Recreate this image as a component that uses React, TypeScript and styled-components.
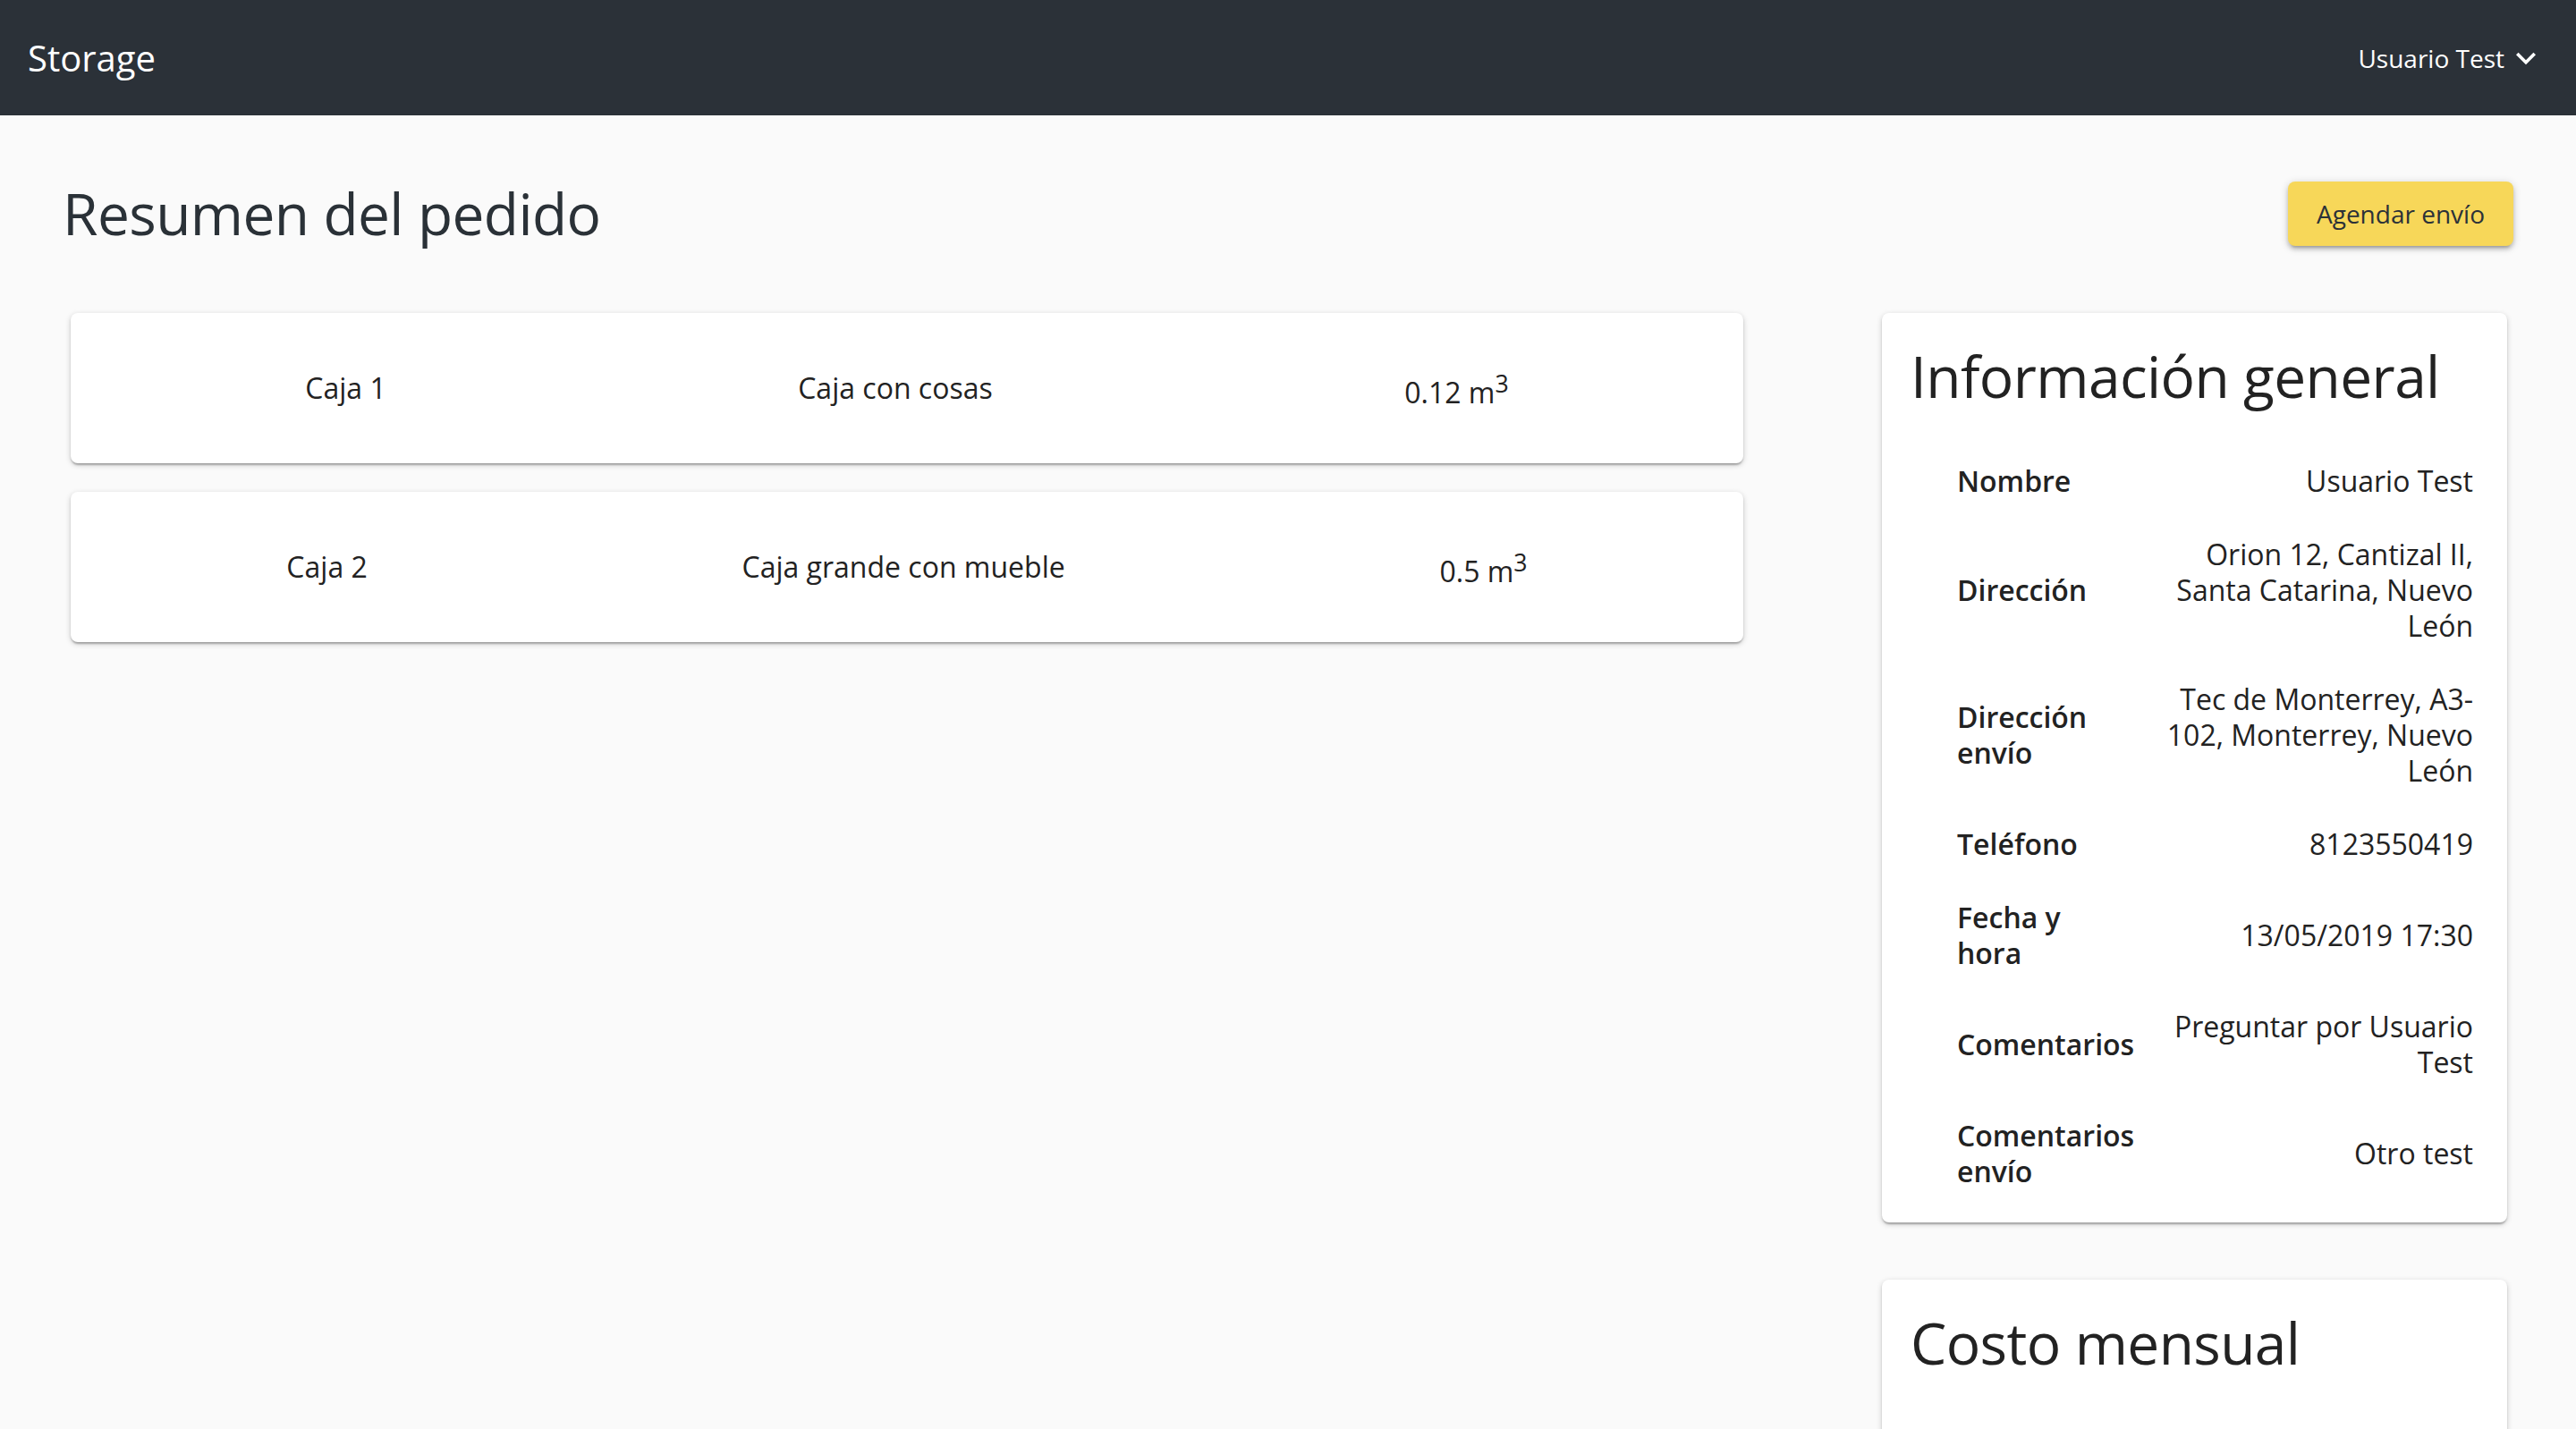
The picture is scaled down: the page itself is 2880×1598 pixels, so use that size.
import React from "react";
import styled, { createGlobalStyle } from "styled-components";

const GlobalStyle = createGlobalStyle`
  html, body {
    margin: 0;
    padding: 0;
    background: #fafafa;
    overflow: hidden;
  }
  body {
    font-family: "Open Sans", "Noto Sans", sans-serif;
    color: #222222;
  }
  * { box-sizing: border-box; }
`;

const NavBar = styled.header`
  height: 129px;
  background: #2b3138;
  display: flex;
  align-items: center;
  justify-content: space-between;
  padding: 0 34px 0 31px;
`;

const Brand = styled.div`
  font-size: 40px;
  line-height: 1;
  color: #ffffff;
`;

const UserMenu = styled.button`
  display: flex;
  align-items: center;
  gap: 2px;
  background: none;
  border: none;
  padding: 0;
  color: #ffffff;
  font-family: inherit;
  font-size: 28px;
  line-height: 1;
  cursor: pointer;
`;

const Main = styled.main`
  padding: 72px 70px 0;
`;

const HeaderRow = styled.div`
  display: flex;
  align-items: center;
  justify-content: space-between;
`;

const PageTitle = styled.h1`
  margin: 0;
  font-size: 64px;
  font-weight: 400;
  line-height: 1.2;
  letter-spacing: -0.6px;
  color: #2a3137;
`;

const PrimaryButton = styled.button`
  height: 72px;
  padding: 0 32px;
  border: none;
  border-radius: 8px;
  background: #f7d759;
  color: #2b3138;
  font-family: inherit;
  font-size: 28px;
  cursor: pointer;
  box-shadow: 0 2px 10px 0 rgba(0, 0, 0, 0.2), 0 4px 4px 0 rgba(0, 0, 0, 0.14),
    0 6px 2px -4px rgba(0, 0, 0, 0.12);
`;

const Content = styled.div`
  margin-top: 72px;
  display: grid;
  grid-template-columns: 1870px 699px;
  justify-content: space-between;
  align-items: start;
  padding: 0 7px 0 9px;
`;

const BoxList = styled.div`
  display: flex;
  flex-direction: column;
  gap: 32px;
`;

const cardSurface = `
  background: #ffffff;
  border-radius: 8px;
  box-shadow: 0 2px 6px 0 rgba(0, 0, 0, 0.2), 0 2px 2px 0 rgba(0, 0, 0, 0.14),
    0 4px 2px -2px rgba(0, 0, 0, 0.12);
`;

const BoxCard = styled.div`
  ${cardSurface}
  height: 168px;
  padding: 0 32px;
  display: flex;
  align-items: center;
  justify-content: space-around;
  font-size: 32px;
  line-height: 40px;
  color: #222222;
`;

const BoxCell = styled.span`
  white-space: nowrap;
`;

const Sidebar = styled.div`
  display: flex;
  flex-direction: column;
  gap: 64px;
`;

const InfoCard = styled.section<{ $tall?: boolean }>`
  ${cardSurface}
  padding: 33px 32px 16px;
  min-height: ${(p) => (p.$tall ? "320px" : "0")};
`;

const CardTitle = styled.h2`
  margin: 0;
  font-size: 64px;
  font-weight: 400;
  line-height: 1.2;
  letter-spacing: -0.6px;
  color: #222222;
`;

const InfoGrid = styled.dl`
  margin: 37px 6px 0 52px;
  display: grid;
  grid-template-columns: 212px 1fr;
  font-size: 32px;
  line-height: 40px;
`;

const InfoLabel = styled.dt`
  padding: 21px 0;
  display: flex;
  align-items: center;
  font-weight: 600;
  white-space: pre-line;
  color: #222222;
`;

const InfoValue = styled.dd`
  margin: 0;
  padding: 21px 0;
  display: flex;
  align-items: center;
  justify-content: flex-end;
  text-align: right;
  white-space: pre-line;
  color: #222222;
`;

const ChevronDown = () => (
  <svg width="44" height="44" viewBox="0 0 24 24" aria-hidden="true">
    <path fill="#ffffff" d="M16.59 8.59L12 13.17 7.41 8.59 6 10l6 6 6-6z" />
  </svg>
);

const boxes = [
  { name: "Caja 1", desc: "Caja con cosas", vol: "0.12" },
  { name: "Caja 2", desc: "Caja grande con mueble", vol: "0.5" },
];

const info = [
  { label: "Nombre", value: "Usuario Test" },
  { label: "Dirección", value: "Orion 12, Cantizal II,\nSanta Catarina, Nuevo\nLeón" },
  { label: "Dirección\nenvío", value: "Tec de Monterrey, A3-\n102, Monterrey, Nuevo\nLeón" },
  { label: "Teléfono", value: "8123550419" },
  { label: "Fecha y\nhora", value: "13/05/2019 17:30" },
  { label: "Comentarios", value: "Preguntar por Usuario\nTest" },
  { label: "Comentarios\nenvío", value: "Otro test" },
];

export default function App() {
  return (
    <>
      <GlobalStyle />
      <NavBar>
        <Brand>Storage</Brand>
        <UserMenu>
          Usuario Test
          <ChevronDown />
        </UserMenu>
      </NavBar>
      <Main>
        <HeaderRow>
          <PageTitle>Resumen del pedido</PageTitle>
          <PrimaryButton>Agendar envío</PrimaryButton>
        </HeaderRow>
        <Content>
          <BoxList>
            {boxes.map((b) => (
              <BoxCard key={b.name}>
                <BoxCell>{b.name}</BoxCell>
                <BoxCell>{b.desc}</BoxCell>
                <BoxCell>
                  {b.vol} m<sup>3</sup>
                </BoxCell>
              </BoxCard>
            ))}
          </BoxList>
          <Sidebar>
            <InfoCard>
              <CardTitle>Información general</CardTitle>
              <InfoGrid>
                {info.map((row) => (
                  <React.Fragment key={row.label}>
                    <InfoLabel>{row.label}</InfoLabel>
                    <InfoValue>{row.value}</InfoValue>
                  </React.Fragment>
                ))}
              </InfoGrid>
            </InfoCard>
            <InfoCard $tall>
              <CardTitle>Costo mensual</CardTitle>
            </InfoCard>
          </Sidebar>
        </Content>
      </Main>
    </>
  );
}
